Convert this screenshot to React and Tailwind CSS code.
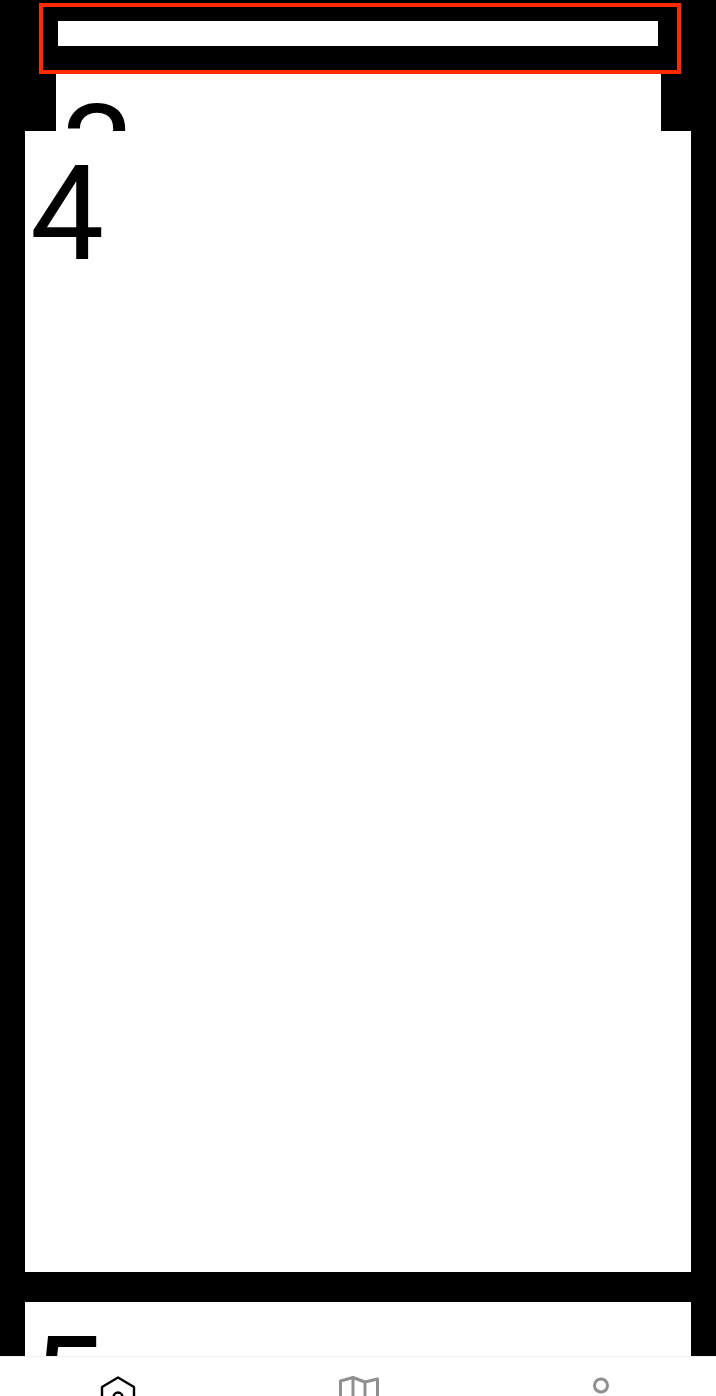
function HomeIcon() {
  return (
    <svg width="36" height="40" viewBox="0 0 36 40" fill="none" stroke="#000" strokeWidth="2.4" strokeLinejoin="round" className="shrink-0">
      <path d="M18 1.5 L34 11 V38 H2 V11 Z" />
      <circle cx="18" cy="21" r="4.5" />
    </svg>
  );
}

function MapIcon() {
  return (
    <svg width="40" height="40" viewBox="0 0 40 40" fill="none" stroke="#8f8f8f" strokeWidth="3" strokeLinejoin="round" className="shrink-0">
      <path d="M1.5 5 L14 1.5 L26 6 L38.5 3 V38 L26 40 L14 36 L1.5 40 Z" />
      <path d="M14 1.5 V36 M26 6 V40" />
    </svg>
  );
}

function UserIcon() {
  return (
    <svg width="40" height="40" viewBox="0 0 40 40" fill="none" stroke="#8f8f8f" strokeWidth="3" className="shrink-0">
      <circle cx="20" cy="9.5" r="6.5" />
      <path d="M6 38 C6 24 34 24 34 38" />
    </svg>
  );
}

function Digit({ children }) {
  return <div className="text-[132px] leading-none text-black pl-[5px] [font-family:Roboto,sans-serif]">{children}</div>;
}

export default function App() {
  return (
    <div className="flex flex-col h-screen overflow-hidden bg-black">
      <div className="pt-[3px] pl-[39px] pr-[35px]">
        <div className="h-[71px] border-4 border-[#ff2a00] pt-[14px] pl-[15px] pr-[19px]">
          <div className="h-[25px] bg-white"></div>
        </div>
      </div>

      <div className="h-[57px] ml-14 mr-[55px] overflow-hidden bg-white pt-[13px]">
        <Digit>3</Digit>
      </div>

      <div className="h-[1141px] mx-[25px] overflow-hidden bg-white pt-[17px]">
        <Digit>4</Digit>
      </div>

      <div className="h-[54px] mt-[30px] mx-[25px] overflow-hidden bg-white pt-[17px]">
        <Digit>5</Digit>
      </div>

      <nav className="flex justify-between h-10 shrink-0 overflow-hidden border-t border-[#f0f0f0] bg-white pt-[19px] pl-[100px] pr-[95px]">
        <HomeIcon />
        <MapIcon />
        <UserIcon />
      </nav>
    </div>
  );
}
